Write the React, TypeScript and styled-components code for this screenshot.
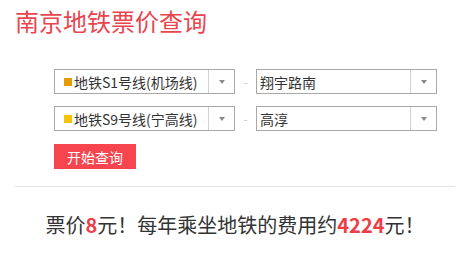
import React from "react";
import styled, { createGlobalStyle } from "styled-components";

const Global = createGlobalStyle`
  html, body { margin: 0; padding: 0; background: #fff; }
  body { font-family: "Microsoft YaHei", "Noto Sans CJK SC", sans-serif; color: #333; }
`;

const Page = styled.div`
  padding: 3px 5px 0 15px;
  width: 460px;
  box-sizing: border-box;
`;

const Title = styled.h1`
  margin: 0;
  font-size: 24px;
  line-height: 36px;
  font-weight: normal;
  color: #e9454e;
`;

const Form = styled.div`
  display: flex;
  flex-direction: column;
  gap: 12px;
  padding: 30px 0 0 39px;
`;

const Row = styled.div`
  display: flex;
  align-items: center;
`;

const Select = styled.div`
  width: 181px;
  height: 25px;
  box-sizing: border-box;
  border: 1px solid #a8a8a8;
  display: flex;
  align-items: stretch;
  background: #fff;
`;

const Value = styled.div<{ $pad: number }>`
  flex: 1;
  display: flex;
  align-items: center;
  padding-left: ${(p) => p.$pad}px;
  font-size: 14px;
  color: #333;
  white-space: nowrap;
`;

const Swatch = styled.span<{ $color: string }>`
  width: 8px;
  height: 8px;
  background: ${(p) => p.$color};
  margin-right: 2px;
  flex: none;
`;

const Arrow = styled.div`
  width: 25px;
  border-left: 1px solid #d0d0d0;
  display: flex;
  align-items: center;
  justify-content: center;
  &::after {
    content: "";
    border-left: 3.5px solid transparent;
    border-right: 3.5px solid transparent;
    border-top: 4px solid #8a8a8a;
  }
`;

const Dash = styled.span`
  width: 21px;
  text-align: center;
  color: #c8c8c8;
  font-size: 12px;
`;

const Button = styled.button`
  margin-top: 1px;
  width: 82px;
  height: 25px;
  border: none;
  background: #f7454f;
  color: #fff;
  font-family: inherit;
  font-size: 14px;
  padding: 0;
  cursor: pointer;
`;

const Divider = styled.hr`
  margin: 17px 0 0 0;
  border: none;
  border-top: 1px solid #e3e3e3;
  height: 0;
`;

const Result = styled.p`
  margin: 0;
  padding-top: 23px;
  text-align: center;
  font-size: 20px;
  line-height: 30px;
  color: #333;
`;

const Num = styled.b`
  color: #ee3d47;
  font-weight: bold;
`;

type Line = { line: string; color: string; station: string };

const rows: Line[] = [
  { line: "地铁S1号线(机场线)", color: "#e59c00", station: "翔宇路南" },
  { line: "地铁S9号线(宁高线)", color: "#f5c400", station: "高淳" },
];

export default function App() {
  return (
    <Page>
      <Global />
      <Title>南京地铁票价查询</Title>
      <Form>
        {rows.map((r) => (
          <Row key={r.line}>
            <Select>
              <Value $pad={9}>
                <Swatch $color={r.color} />
                {r.line}
              </Value>
              <Arrow />
            </Select>
            <Dash>-</Dash>
            <Select>
              <Value $pad={3}>{r.station}</Value>
              <Arrow />
            </Select>
          </Row>
        ))}
        <div>
          <Button>开始查询</Button>
        </div>
      </Form>
      <Divider />
      <Result>
        票价<Num>8</Num>元！每年乘坐地铁的费用约<Num>4224</Num>元！
      </Result>
    </Page>
  );
}
